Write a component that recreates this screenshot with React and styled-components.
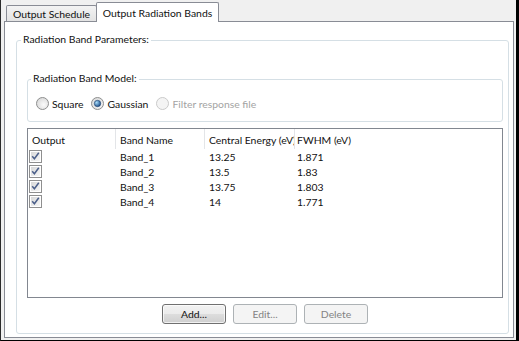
import React from 'react';
import styled, { createGlobalStyle } from 'styled-components';

const GlobalStyle = createGlobalStyle`
    html, body {
        margin: 0;
        padding: 0;
        background: #fff;
    }
    body {
        font-family: Lato, "Noto Sans", sans-serif;
        font-size: 10.4px;
        color: #111;
    }
`;

const Frame = styled.div`
    box-sizing: border-box;
    width: 519px;
    height: 341px;
    border-left: 1px solid #2b2b2b;
    border-right: 3px solid #000;
    border-bottom: 1px solid #000;
    background: #f0f0f0;
    padding: 2px 2px 2px 3px;
    display: flex;
    flex-direction: column;
`;

const TabStrip = styled.div`
    display: flex;
    align-items: flex-end;
    height: 19px;
    padding-left: 2px;
    position: relative;
    z-index: 1;
`;

const Tab = styled.div`
    box-sizing: border-box;
    width: ${(p) => p.$width}px;
    height: ${(p) => (p.$active ? 20 : 16)}px;
    margin-bottom: ${(p) => (p.$active ? -1 : 0)}px;
    margin-left: ${(p) => (p.$active ? -1 : 0)}px;
    border: 1px solid #898c95;
    border-bottom: none;
    border-radius: 2px 2px 0 0;
    background: ${(p) => (p.$active ? '#fff' : 'linear-gradient(#f3f3f3, #e3e3e3)')};
    display: flex;
    align-items: center;
    justify-content: center;
    padding-top: ${(p) => (p.$active ? 0 : 1)}px;
    white-space: nowrap;
`;

const Pane = styled.div`
    flex: 1;
    background: #fff;
    border: 1px solid #898c95;
    display: flex;
    flex-direction: column;
    padding: 18px 4px 3px 11px;
`;

const Group = styled.div`
    position: relative;
    border: 1px solid #d5dfe5;
    border-radius: 3px;
    display: flex;
`;

const ParamsGroup = styled(Group)`
    flex: 1;
    flex-direction: column;
    padding: 38px 5px 9px 10px;
`;

const ModelGroup = styled(Group)`
    box-sizing: border-box;
    height: 43px;
    align-items: center;
    padding: 6px 8px 0 8px;
`;

const GroupTitle = styled.span`
    position: absolute;
    top: -9px;
    left: ${(p) => p.$left}px;
    padding: 0 2px;
    line-height: 15px;
    background: #fff;
`;

const RadioOption = styled.label`
    display: flex;
    align-items: center;
    gap: 3px;
    margin-right: 8px;
    color: ${(p) => (p.$disabled ? '#a3a3a3' : 'inherit')};
`;

const Table = styled.div`
    margin-top: 6px;
    flex: 1;
    border: 1px solid #828790;
    background: #fff;
`;

const Row = styled.div`
    display: grid;
    grid-template-columns: 88px 89px 90px 1fr;
    height: ${(p) => (p.$header ? 20 : 15)}px;
`;

const HeaderCell = styled.div`
    box-sizing: border-box;
    padding: 2px 0 0 ${(p) => p.$pad ?? 4}px;
    border-right: ${(p) => (p.$last ? 'none' : '1px solid #e3e5e8')};
    display: flex;
    align-items: center;
    white-space: nowrap;
    overflow: hidden;
`;

const Cell = styled.div`
    padding-left: ${(p) => p.$pad ?? 4}px;
    display: flex;
    align-items: center;
    white-space: nowrap;
`;

const ButtonRow = styled.div`
    display: flex;
    justify-content: center;
    gap: 7px;
    margin-top: 6px;
`;

const Button = styled.button`
    box-sizing: border-box;
    width: 64px;
    height: 20px;
    padding: 0;
    font: inherit;
    border-radius: 3px;
    border: 1px solid ${(p) => (p.disabled ? '#adb2b5' : '#707070')};
    color: ${(p) => (p.disabled ? '#838383' : '#111')};
    background: ${(p) => (p.disabled
        ? '#f4f4f4'
        : 'linear-gradient(#f2f2f2 0%, #ebebeb 50%, #dddddd 51%, #cfcfcf 100%)')};
    box-shadow: ${(p) => (p.disabled ? 'none' : 'inset 0 0 0 1px rgba(255,255,255,0.7)')};
`;

const Radio = ({ checked, disabled }) => (
    <svg width="13" height="13" viewBox="0 0 13 13">
        <defs>
            <radialGradient id="radioFill" cx="0.6" cy="0.6" r="0.7">
                <stop offset="0" stopColor="#fbfbfb" />
                <stop offset="1" stopColor="#d6d6d6" />
            </radialGradient>
            <radialGradient id="radioDot" cx="0.35" cy="0.35" r="0.7">
                <stop offset="0" stopColor="#a8dcfa" />
                <stop offset="1" stopColor="#174a87" />
            </radialGradient>
        </defs>
        <circle
            cx="6.5"
            cy="6.5"
            r="6"
            fill={disabled ? '#f4f4f4' : 'url(#radioFill)'}
            stroke={disabled ? '#c9c9c9' : '#8e8f8f'}
        />
        {checked && <circle cx="6.5" cy="6.5" r="3.2" fill="url(#radioDot)" stroke="#1f3f6a" strokeWidth="0.6" />}
    </svg>
);

const Checkbox = () => (
    <svg width="13" height="13" viewBox="0 0 13 13">
        <defs>
            <linearGradient id="checkFill" x1="0" y1="0" x2="1" y2="1">
                <stop offset="0" stopColor="#d8d8d8" />
                <stop offset="1" stopColor="#f6f6f6" />
            </linearGradient>
        </defs>
        <rect x="0.5" y="0.5" width="12" height="12" fill="#fff" stroke="#8f8f8f" />
        <rect x="2" y="2" width="9" height="9" fill="url(#checkFill)" />
        <path d="M3.2 6.2 L5.4 8.8 L9.8 2.8" fill="none" stroke="#4b5f8a" strokeWidth="1.5" />
    </svg>
);

const bands = [
    { name: 'Band_1', energy: '13.25', fwhm: '1.871' },
    { name: 'Band_2', energy: '13.5', fwhm: '1.83' },
    { name: 'Band_3', energy: '13.75', fwhm: '1.803' },
    { name: 'Band_4', energy: '14', fwhm: '1.771' },
];

export default function App() {
    return (
        <>
            <GlobalStyle />
            <Frame>
                <TabStrip>
                    <Tab $width={91}>Output Schedule</Tab>
                    <Tab $width={123} $active>Output Radiation Bands</Tab>
                </TabStrip>
                <Pane>
                    <ParamsGroup>
                        <GroupTitle $left={4}>Radiation Band Parameters:</GroupTitle>
                        <ModelGroup>
                            <GroupTitle $left={3}>Radiation Band Model:</GroupTitle>
                            <RadioOption><Radio />Square</RadioOption>
                            <RadioOption><Radio checked />Gaussian</RadioOption>
                            <RadioOption $disabled><Radio disabled />Filter response file</RadioOption>
                        </ModelGroup>
                        <Table>
                            <Row $header>
                                <HeaderCell>Output</HeaderCell>
                                <HeaderCell>Band Name</HeaderCell>
                                <HeaderCell>Central Energy (eV)</HeaderCell>
                                <HeaderCell $pad={2} $last>FWHM (eV)</HeaderCell>
                            </Row>
                            {bands.map((b) => (
                                <Row key={b.name}>
                                    <Cell $pad={1}><Checkbox /></Cell>
                                    <Cell>{b.name}</Cell>
                                    <Cell>{b.energy}</Cell>
                                    <Cell $pad={2}>{b.fwhm}</Cell>
                                </Row>
                            ))}
                        </Table>
                        <ButtonRow>
                            <Button>Add...</Button>
                            <Button disabled>Edit...</Button>
                            <Button disabled>Delete</Button>
                        </ButtonRow>
                    </ParamsGroup>
                </Pane>
            </Frame>
        </>
    );
}
